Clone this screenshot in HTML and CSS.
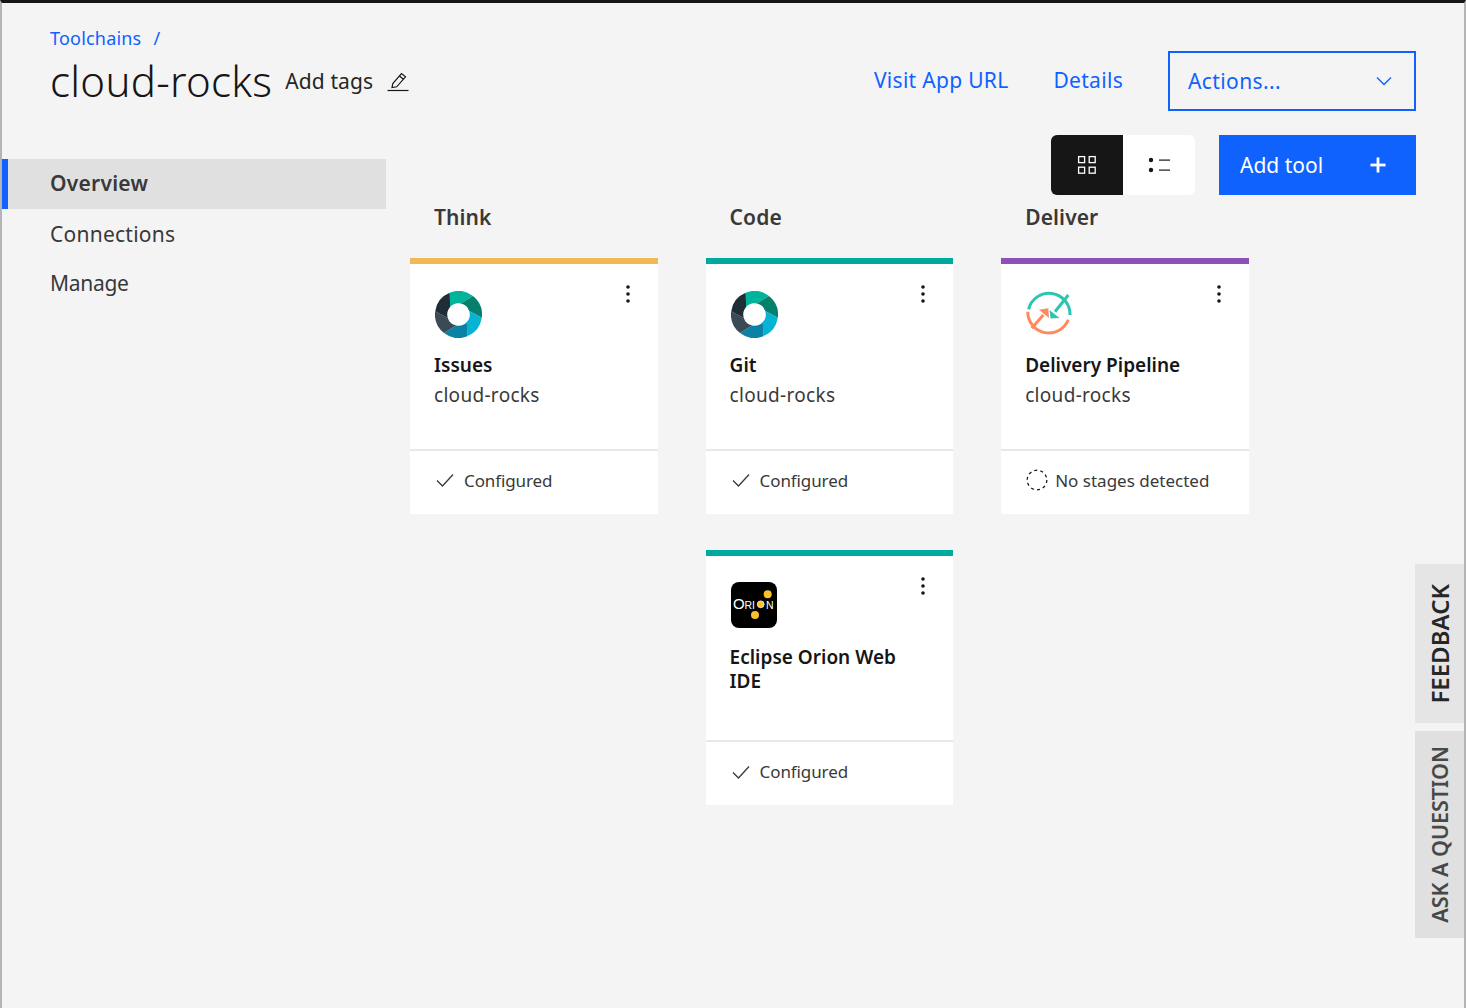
FILE: index.html
```html
<!DOCTYPE html>
<html lang="en">
<head>
<meta charset="utf-8">
<title>cloud-rocks</title>
<link rel="stylesheet" href="styles.css">
</head>
<body>
<svg class="defs" width="0" height="0" aria-hidden="true">
  <symbol id="donut" viewBox="-24 -24 48 48">
    <path fill="#00b39b" d="M-8.99 -22.25A24 24 0 0 1 14.78 -18.91L2.39 -11.25A11.5 11.5 0 0 0 -8.55 -7.7Z"/>
    <path fill="#04806c" transform="rotate(60)" d="M-8.99 -22.25A24 24 0 0 1 14.78 -18.91L2.39 -11.25A11.5 11.5 0 0 0 -8.55 -7.7Z"/>
    <path fill="#07b3d4" transform="rotate(120)" d="M-8.99 -22.25A24 24 0 0 1 14.78 -18.91L2.39 -11.25A11.5 11.5 0 0 0 -8.55 -7.7Z"/>
    <path fill="#0b81a6" transform="rotate(180)" d="M-8.99 -22.25A24 24 0 0 1 14.78 -18.91L2.39 -11.25A11.5 11.5 0 0 0 -8.55 -7.7Z"/>
    <path fill="#3b4b56" transform="rotate(240)" d="M-8.99 -22.25A24 24 0 0 1 14.78 -18.91L2.39 -11.25A11.5 11.5 0 0 0 -8.55 -7.7Z"/>
    <path fill="#1e2d36" transform="rotate(300)" d="M-8.99 -22.25A24 24 0 0 1 14.78 -18.91L2.39 -11.25A11.5 11.5 0 0 0 -8.55 -7.7Z"/>
  </symbol>
  <symbol id="check" viewBox="0 0 20 20">
    <path d="M2 10.5 7.5 16 18 4.5" fill="none" stroke="#393939" stroke-width="1.3"/>
  </symbol>
  <symbol id="dots" viewBox="0 0 6 20">
    <circle cx="3" cy="3" r="1.8"/><circle cx="3" cy="10" r="1.8"/><circle cx="3" cy="17" r="1.8"/>
  </symbol>
</svg>
<div class="page">
  <header class="header">
    <div class="title-block">
      <nav class="crumbs"><a class="crumb-link">Toolchains</a><span class="crumb-sep">/</span></nav>
      <div class="title-row">
        <h1 class="title">cloud-rocks</h1>
        <span class="tags">Add tags</span>
        <svg class="pencil" width="22" height="22" viewBox="0 0 22 22" fill="none" stroke="#161616" stroke-width="1.2">
          <path d="M0.5 19.5H21.5"/>
          <path d="M5 16.5 5.8 12.5 14.5 2.5 18.5 5.8 9.7 15.8Z"/>
          <path d="M12.4 5 16.4 8.3"/>
        </svg>
      </div>
    </div>
    <div class="header-actions">
      <a class="head-link">Visit App URL</a>
      <a class="head-link">Details</a>
      <div class="dropdown">
        <span>Actions...</span>
        <svg width="16" height="10" viewBox="0 0 16 10" fill="none" stroke="#0f62fe" stroke-width="1.4"><path d="M1 1.5 8 8.5 15 1.5"/></svg>
      </div>
    </div>
  </header>
  <div class="body-row">
    <aside class="sidenav">
      <div class="nav-item nav-active">Overview</div>
      <div class="nav-item">Connections</div>
      <div class="nav-item nav-tight">Manage</div>
    </aside>
    <main class="main">
      <div class="toolbar">
        <div class="switch">
          <div class="switch-btn switch-on">
            <svg width="20" height="20" viewBox="0 0 20 20" fill="none" stroke="#fff" stroke-width="1.3">
              <rect x="1.6" y="1.6" width="6" height="6"/><rect x="12.2" y="1.6" width="6" height="6"/>
              <rect x="1.6" y="12.2" width="6" height="6"/><rect x="12.2" y="12.2" width="6" height="6"/>
            </svg>
          </div>
          <div class="switch-btn">
            <svg width="22" height="16" viewBox="0 0 22 16" fill="#161616">
              <circle cx="3" cy="3" r="2.2"/><circle cx="3" cy="13" r="2.2"/>
              <rect x="11" y="2.5" width="11" height="1.2"/><rect x="11" y="12.5" width="11" height="1.2"/>
            </svg>
          </div>
        </div>
        <button class="add-btn"><span>Add tool</span>
          <svg width="16" height="16" viewBox="0 0 16 16" fill="#fff"><rect x="6.6" y="0.5" width="2.8" height="15"/><rect x="0.5" y="6.6" width="15" height="2.8"/></svg>
        </button>
      </div>
      <div class="board">
        <section class="lane">
          <h2 class="lane-title">Think</h2>
          <article class="card card-think">
            <div class="card-body">
              <svg class="menu" width="6" height="20"><use href="#dots"/></svg>
              <svg class="logo logo-donut" width="47" height="47"><use href="#donut"/></svg>
              <div class="card-name">Issues</div>
              <div class="card-sub">cloud-rocks</div>
            </div>
            <div class="card-foot"><svg width="20" height="20"><use href="#check"/></svg><span>Configured</span></div>
          </article>
        </section>
        <section class="lane">
          <h2 class="lane-title">Code</h2>
          <article class="card card-code">
            <div class="card-body">
              <svg class="menu" width="6" height="20"><use href="#dots"/></svg>
              <svg class="logo logo-donut" width="47" height="47"><use href="#donut"/></svg>
              <div class="card-name">Git</div>
              <div class="card-sub">cloud-rocks</div>
            </div>
            <div class="card-foot"><svg width="20" height="20"><use href="#check"/></svg><span>Configured</span></div>
          </article>
          <article class="card card-code">
            <div class="card-body">
              <svg class="menu" width="6" height="20"><use href="#dots"/></svg>
              <svg class="logo" width="48" height="48" viewBox="0 0 48 48">
                <rect x="1" y="0" width="46" height="46" rx="8" fill="#000"/>
                <text class="orion" x="3" y="27">O</text>
                <text class="orion-s" x="14.5" y="27">R</text>
                <text class="orion-s" x="22" y="27">I</text>
                <text class="orion-s" x="36" y="27">N</text>
                <circle cx="37.7" cy="12.3" r="4" fill="#fbc02d"/>
                <circle cx="25" cy="33" r="4" fill="#fbc02d"/>
                <circle cx="30.7" cy="22.3" r="3.4" fill="#fbc02d" stroke="#fff" stroke-width="0.8"/>
              </svg>
              <div class="card-name">Eclipse Orion Web IDE</div>
            </div>
            <div class="card-foot"><svg width="20" height="20"><use href="#check"/></svg><span>Configured</span></div>
          </article>
        </section>
        <section class="lane">
          <h2 class="lane-title">Deliver</h2>
          <article class="card card-deliver">
            <div class="card-body">
              <svg class="menu" width="6" height="20"><use href="#dots"/></svg>
              <svg class="logo" width="48" height="48" viewBox="0 0 48 48" fill="none" stroke-width="3">
                <path stroke="#2ec4ae" d="M3.6 19.3A21 21 0 0 1 45 25"/>
                <path stroke="#2ec4ae" stroke-width="3" d="M43.3 5 30 21.7"/>
                <path fill="#2ec4ae" d="M25.5 28.5 24.5 20 34.5 28Z"/>
                <path stroke="#ff8a5c" d="M2.8 21.7A21 21 0 0 0 43.3 29.8"/>
                <path stroke="#ff8a5c" stroke-width="3" d="M6.7 38.3 18.3 25"/>
                <path fill="#ff8a5c" d="M23.3 18.3 14 19.8 24 28Z"/>
              </svg>
              <div class="card-name">Delivery Pipeline</div>
              <div class="card-sub">cloud-rocks</div>
            </div>
            <div class="card-foot"><svg class="ring" width="22" height="22" viewBox="0 0 22 22"><circle cx="11" cy="11" r="9.8" fill="none" stroke="#161616" stroke-width="1.3" stroke-dasharray="3 3.16"/></svg><span>No stages detected</span></div>
          </article>
        </section>
      </div>
    </main>
  </div>
  <div class="side-tab tab-feedback"><span>FEEDBACK</span></div>
  <div class="side-tab tab-ask"><span>ASK A QUESTION</span></div>
</div>
</body>
</html>
```
FILE: styles.css
```css
* { box-sizing: border-box; }
html, body { margin: 0; padding: 0; height: 100%; }
body { background: #f4f4f4; font-family: "Noto Sans", "Open Sans", sans-serif; color: #161616; overflow: hidden; }
.defs { position: absolute; }
.page { position: relative; height: 1008px; border-top: 3px solid #161616; border-left: 2px solid #b4b4b4; border-right: 2px solid #b4b4b4; }
a { color: #0f62fe; }

.header { display: flex; justify-content: space-between; padding: 23px 48px 0; height: 132px; }
.crumbs { display: flex; height: 24px; align-items: center; font-size: 18px; letter-spacing: 0.2px; color: #0f62fe; }
.crumb-sep { margin-left: 12px; }
.title-row { display: flex; align-items: center; margin-top: 6px; height: 50px; }
.title { margin: 0; font-size: 42px; font-weight: 300; letter-spacing: 0.28px; line-height: 50px; }
.tags { font-size: 21px; margin-left: 13px; color: #262626; line-height: 40px; margin-top: 0; letter-spacing: 0.1px; }
.pencil { margin-left: 14px; margin-top: 2px; }
.header-actions { display: flex; align-items: center; height: 60px; margin-top: 25px; }
.head-link { font-size: 21px; letter-spacing: 0.3px; margin-right: 45px; padding-bottom: 2px; }
.dropdown { width: 248px; height: 60px; border: 2px solid #0f62fe; display: flex; align-items: center; justify-content: space-between; padding: 0 22px 0 18px; font-size: 21px; letter-spacing: 0.4px; color: #0f62fe; }

.body-row { display: flex; }
.sidenav { width: 384px; padding-top: 24px; flex: none; }
.nav-item { height: 50px; line-height: 50px; padding-left: 48px; font-size: 21px; letter-spacing: 0.25px; color: #393939; }
.nav-active { background: #e0e0e0; font-weight: 600; border-left: 6px solid #0f62fe; padding-left: 42px; line-height: 49px; }
.nav-tight { letter-spacing: -0.3px; line-height: 49px; }

.main { flex: 1; padding-left: 24px; padding-right: 48px; }
.toolbar { display: flex; justify-content: flex-end; gap: 24px; height: 60px; }
.switch { display: flex; width: 144px; height: 60px; border-radius: 6px; overflow: hidden; background: #fff; }
.switch-btn { flex: 1; display: flex; align-items: center; justify-content: center; }
.switch-on { background: #161616; }
.add-btn { width: 197px; height: 60px; background: #0f62fe; color: #fff; border: 0; display: flex; align-items: center; justify-content: space-between; padding: 0 30px 0 21px; font: inherit; font-size: 21px; }

.board { display: flex; gap: 48px; margin-top: 6px; }
.lane { width: 247.6px; display: flex; flex-direction: column; gap: 36px; }
.lane-title { margin: 0 0 -36px; height: 57px; padding-left: 24px; font-size: 21px; font-weight: 600; letter-spacing: 0.1px; line-height: 33px; color: #393939; }
.card { height: 255.5px; background: #fff; border-top: 6px solid; display: flex; flex-direction: column; }
.card-think { border-color: #f0b955; }
.card-code { border-color: #00a99d; }
.card-deliver { border-color: #8c50b8; }
.card-body { position: relative; flex: 1; padding: 26px 24px 0; border-bottom: 2px solid #e8e8e8; }
.menu { position: absolute; top: 20px; right: 27px; fill: #161616; }
.logo { display: block; }
.logo-donut { margin-left: 1px; margin-top: 1px; }
.card-name { margin-top: 15px; font-size: 19px; font-weight: 600; line-height: 24px; color: #161616; }
.card-sub { margin-top: 6px; font-size: 19px; letter-spacing: 0.3px; line-height: 24px; color: #393939; }
.card-foot { height: 63px; display: flex; align-items: center; padding: 0 0 4px 25px; font-size: 17px; color: #393939; }
.card-foot span { margin-left: 9px; letter-spacing: -0.1px; }
.card-foot .ring + span { margin-left: 7px; letter-spacing: 0; }
.orion { font-family: "Liberation Sans", sans-serif; font-size: 15px; fill: #fff; }
.orion-s { font-family: "Liberation Sans", sans-serif; font-size: 10.5px; fill: #fff; }

.side-tab { position: absolute; right: 0; width: 49px; display: flex; align-items: center; justify-content: center; }
.side-tab span { writing-mode: vertical-rl; transform: rotate(180deg); font-weight: 600; white-space: nowrap; }
.tab-feedback { top: 561px; height: 159px; background: #e5e5e5; color: #262626; }
.tab-feedback span { font-size: 24px; }
.tab-ask { top: 728px; height: 207px; background: #e0e0e0; color: #484848; }
.tab-ask span { font-size: 21.5px; }
```
